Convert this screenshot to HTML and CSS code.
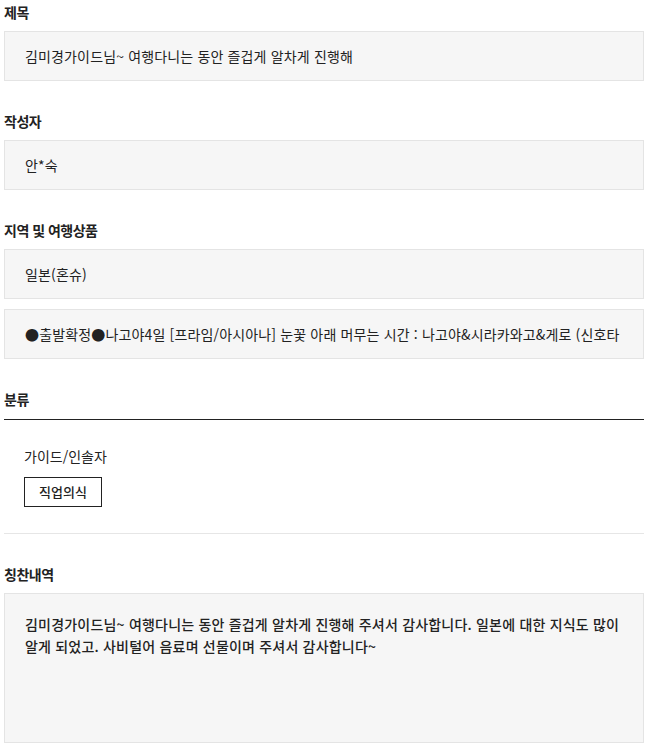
FILE: index.html
```html
<!DOCTYPE html>
<html lang="ko">
<head>
<meta charset="utf-8">
<title>칭찬 상세</title>
<link rel="stylesheet" href="styles.css">
</head>
<body>
<div class="wrap">
  <div class="field first">
    <h3 class="label">제목</h3>
    <div class="box">김미경가이드님~ 여행다니는 동안 즐겁게 알차게 진행해</div>
  </div>
  <div class="field">
    <h3 class="label">작성자</h3>
    <div class="box">안*숙</div>
  </div>
  <div class="field">
    <h3 class="label">지역 및 여행상품</h3>
    <div class="box">일본(혼슈)</div>
    <div class="box nowrap">●출발확정●나고야4일 [프라임/아시아나] 눈꽃 아래 머무는 시간 : 나고야&amp;시라카와고&amp;게로 (신호타</div>
  </div>
  <div class="field">
    <h3 class="label dark">분류</h3>
    <div class="category">
      <p class="cat-name">가이드/인솔자</p>
      <span class="tag">직업의식</span>
    </div>
  </div>
  <div class="field">
    <h3 class="label">칭찬내역</h3>
    <div class="box content">김미경가이드님~ 여행다니는 동안 즐겁게 알차게 진행해 주셔서 감사합니다. 일본에 대한 지식도 많이 알게 되었고. 사비털어 음료며 선물이며 주셔서 감사합니다~</div>
  </div>
</div>
</body>
</html>
```

FILE: styles.css
```css
* { box-sizing: border-box; }
html, body { margin: 0; padding: 0; background: #fff; }
body {
  font-family: "Noto Sans CJK KR", "Noto Sans", sans-serif;
  font-size: 14px;
  color: #222;
}
.wrap {
  width: 640px;
  margin-left: 4px;
  padding-top: 2px;
}
.field { margin-top: 30px; }
.field.first { margin-top: 0; }
.label {
  margin: 0 0 9px;
  font-size: 14px;
  line-height: 20px;
  font-weight: 700;
  letter-spacing: -0.5px;
}
.label.dark {
  margin-bottom: 0;
  padding-bottom: 10px;
  border-bottom: 1px solid #222;
}
.box {
  background: #f6f6f6;
  border: 1px solid #e4e4e4;
  padding: 14px 20px;
  line-height: 20px;
  height: 50px;
  letter-spacing: 0.15px;
}
.box + .box { margin-top: 10px; }
.nowrap {
  white-space: nowrap;
  overflow: hidden;
}
.category {
  padding: 26px 20px 26px;
  border-bottom: 1px solid #e6e6e6;
}
.cat-name {
  margin: 0;
  line-height: 20px;
}
.tag {
  display: inline-block;
  margin-top: 11px;
  height: 30px;
  padding: 0 14px;
  border: 1px solid #222;
  font-size: 13px;
  line-height: 28px;
  font-weight: 500;
}
.content {
  height: 150px;
  padding: 19px 20px;
  line-height: 22px;
  font-weight: 500;
  letter-spacing: 0.2px;
  word-break: keep-all;
}
```
